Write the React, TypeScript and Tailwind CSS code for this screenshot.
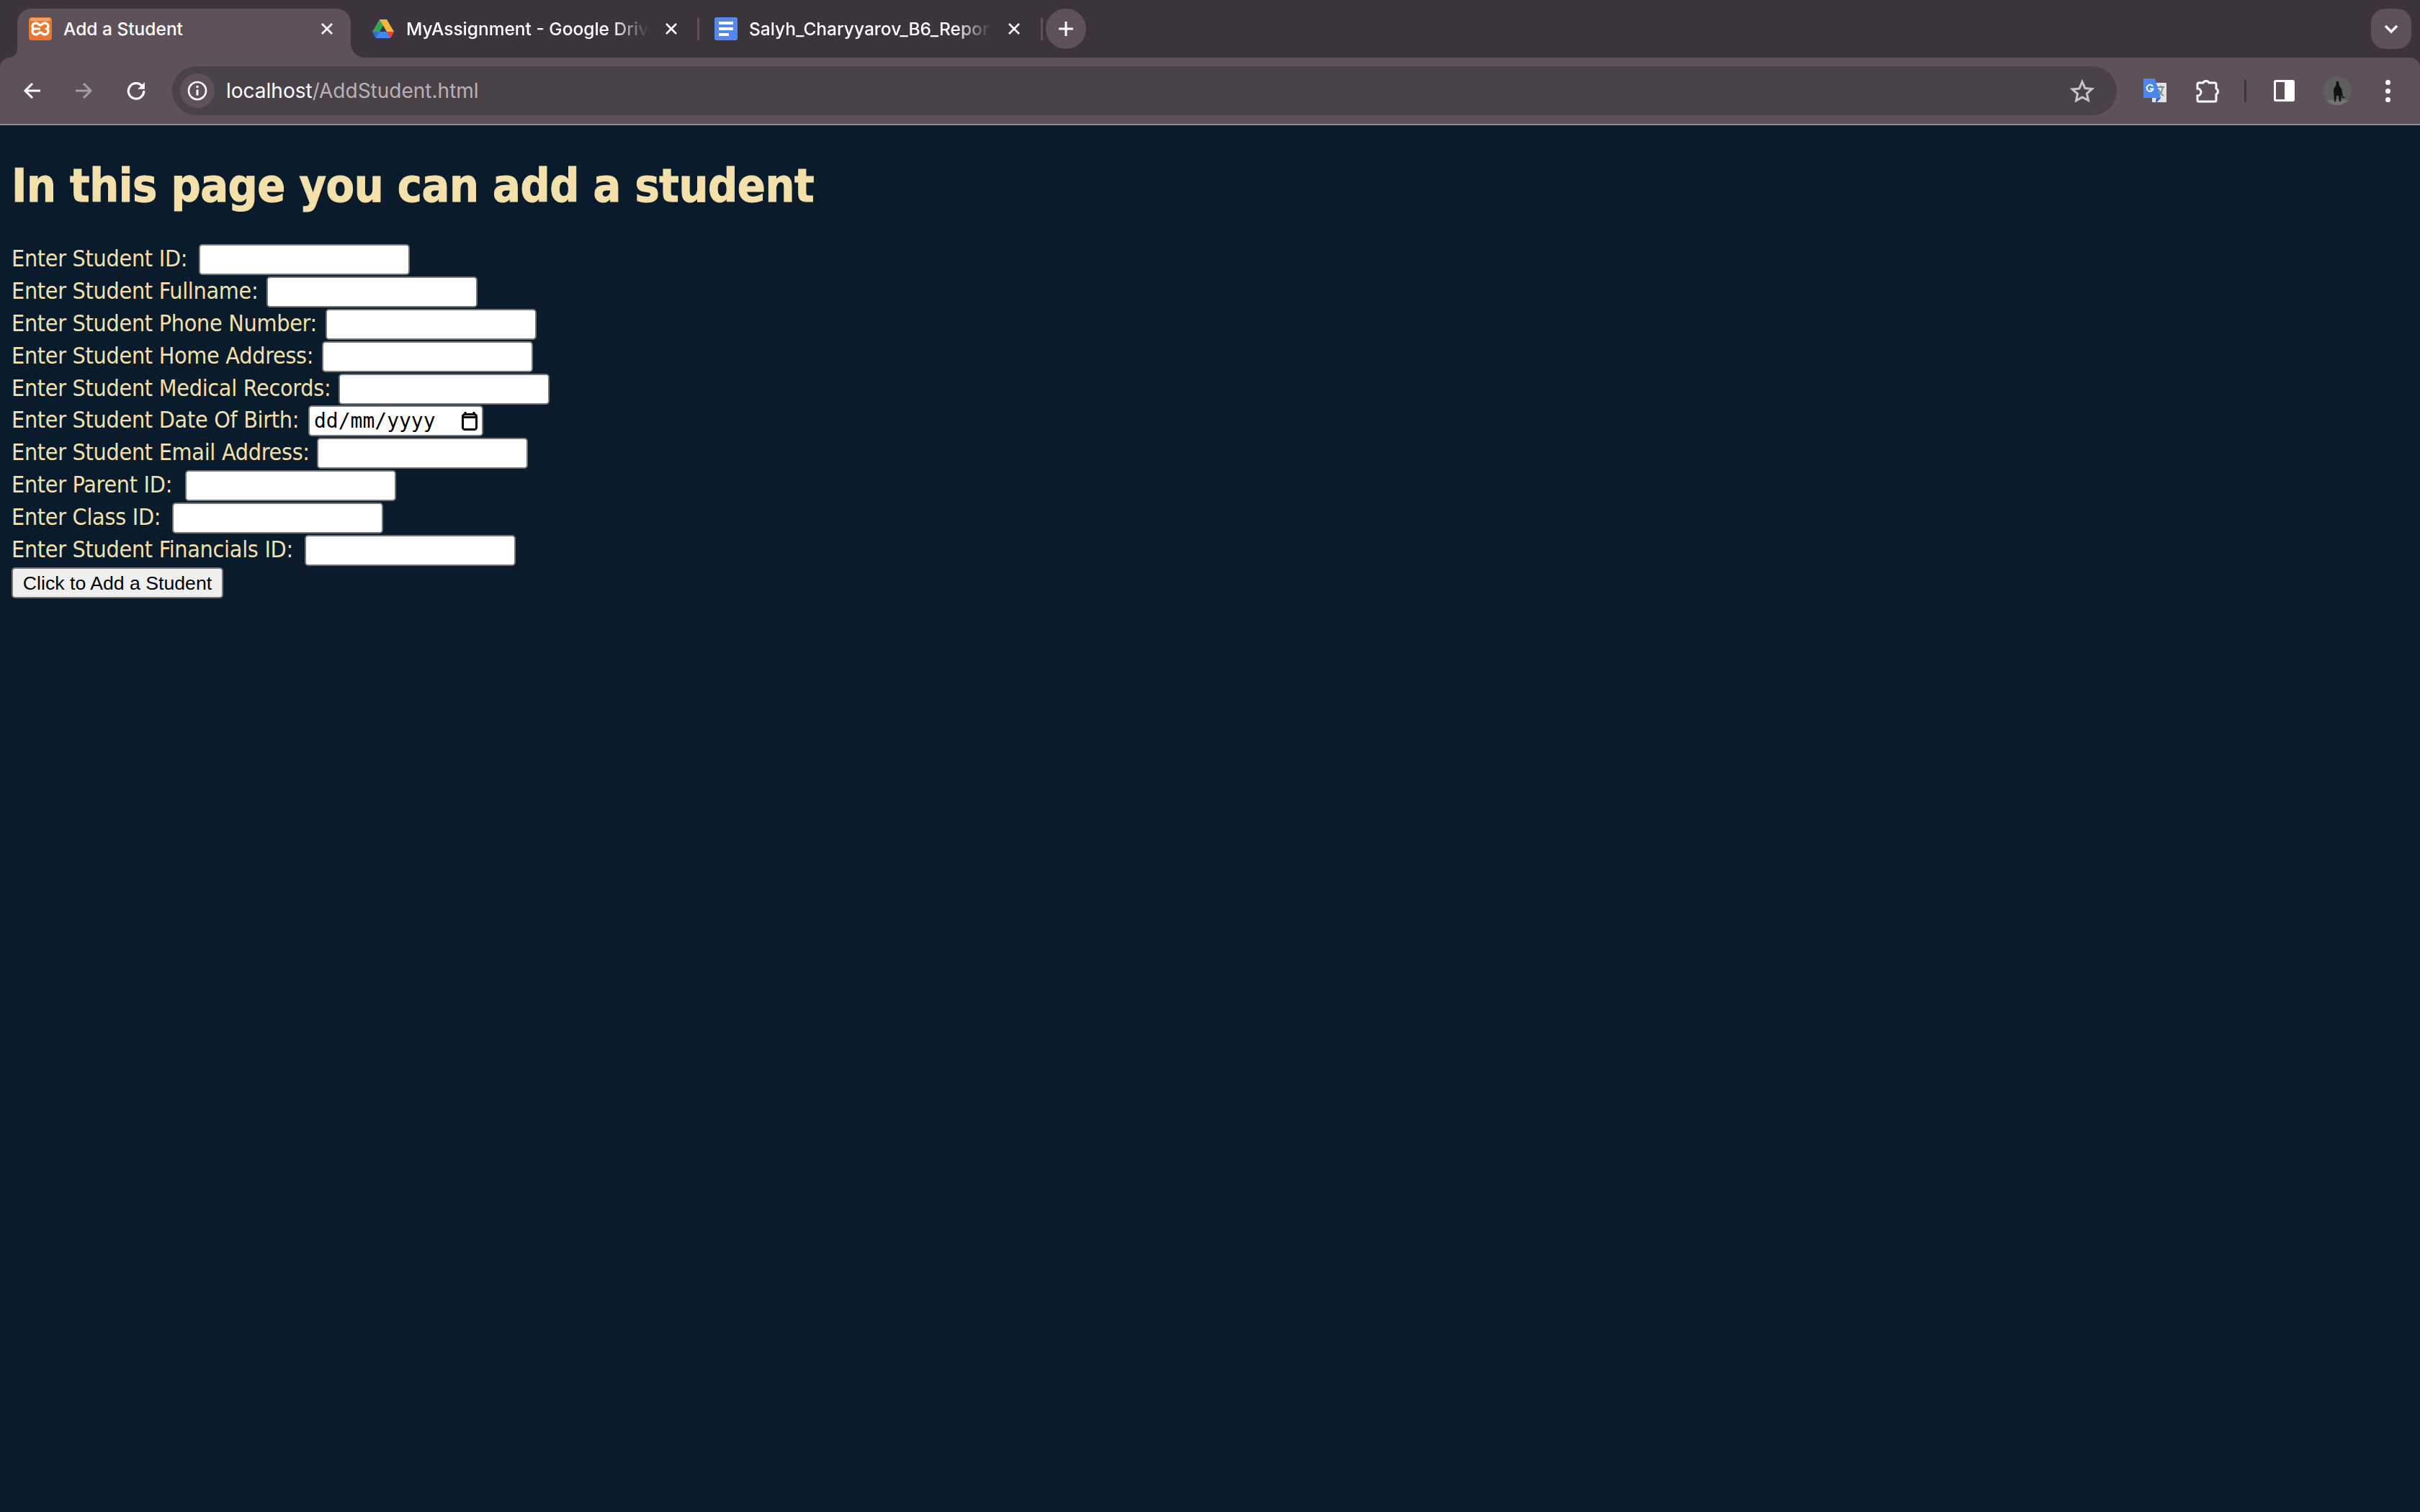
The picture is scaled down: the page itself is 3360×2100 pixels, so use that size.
const fields = [
  { label: "Enter Student ID:", width: "w-[247px]" },
  { label: "Enter Student Fullname:", width: "w-[341px]" },
  { label: "Enter Student Phone Number:", width: "w-[423px]" },
  { label: "Enter Student Home Address:", width: "w-[418px]" },
  { label: "Enter Student Medical Records:", width: "w-[441px]" },
  { label: "Enter Student Date Of Birth:", width: "w-[399px]", date: true },
  { label: "Enter Student Email Address:", width: "w-[411px]" },
  { label: "Enter Parent ID:", width: "w-[228px]" },
  { label: "Enter Class ID:", width: "w-[210px]" },
  { label: "Enter Student Financials ID:", width: "w-[394px]" },
];

function CloseIcon() {
  return (
    <svg width="20" height="20" viewBox="0 0 20 20" className="shrink-0">
      <path d="M3 3 17 17M17 3 3 17" stroke="#fff" strokeWidth="2.6" fill="none" />
    </svg>
  );
}

function XamppIcon() {
  return (
    <svg width="32" height="32" viewBox="0 0 32 32" className="shrink-0">
      <rect width="32" height="32" rx="4" fill="#e8762f" />
      <rect x="2" y="1" width="28" height="4" rx="2" fill="#f2a36c" />
      <path d="M10 8c3 0 4 3 6 3s3-3 6-3c3.500 0 5 2.500 5 5 0 1.500-1 2.500-2 3 1 .5 2 1.500 2 3 0 2.500-1.500 5-5 5-3 0-4-3-6-3s-3 3-6 3c-3.500 0-5-2.500-5-5 0-1.500 1-2.500 2-3-1-.5-2-1.500-2-3 0-2.500 1.500-5 5-5Z" stroke="#fff" strokeWidth="3.4" fill="none" />
      <path d="M8 16h8M16 16v0" stroke="#fff" strokeWidth="3" />
    </svg>
  );
}

function DriveIcon() {
  return (
    <svg width="30" height="26" viewBox="0 0 30 26" className="shrink-0">
      <path d="M10 0h10L10 17H0Z" fill="#34a853" />
      <path d="M10 0h10l10 17H20Z" fill="#f6b73c" />
      <path d="M0 17h30l-5 9H5Z" fill="#4285f4" />
      <path d="M0 17h10l-5 9Z" fill="#2f6fd6" />
      <path d="M20 17h10l-5 9Z" fill="#ea4335" />
    </svg>
  );
}

function DocsIcon() {
  return (
    <div className="flex h-8 w-8 shrink-0 flex-col items-start justify-center gap-[4px] rounded-[3px] bg-[#5587ee] pl-[6px]">
      <div className="h-[4px] w-5 bg-white" />
      <div className="h-[4px] w-5 bg-white" />
      <div className="h-[4px] w-[14px] bg-white" />
    </div>
  );
}

function TabSep() {
  return <div className="h-8 w-[3px] shrink-0 rounded-full bg-[#5e5159]" />;
}

function Strip() {
  return (
    <div className="flex h-20 items-start bg-[#3c343c] pt-3">
      {/* active tab */}
      <div className="relative ml-6 flex h-[68px] w-[463px] shrink-0 items-start gap-4 rounded-t-[20px] bg-[#5e5159] pl-4 pr-[23px] pt-3">
        <span className="absolute bottom-0 left-[-12px] h-3 w-3 bg-[#5e5159]">
          <span className="block h-3 w-3 rounded-br-[12px] bg-[#3c343c]" />
        </span>
        <span className="absolute bottom-0 right-[-20px] h-5 w-5 bg-[#5e5159]">
          <span className="block h-5 w-5 rounded-bl-[20px] bg-[#3c343c]" />
        </span>
        <XamppIcon />
        <span className="flex-1 truncate text-[24.500px] leading-8 font-medium text-white">Add a Student</span>
        <span className="mt-[6px]"><CloseIcon /></span>
      </div>
      {/* inactive tabs */}
      <div className="ml-[30px] mt-3 flex h-8 shrink-0 items-center">
        <DriveIcon />
        <span className="ml-[17px] w-[336px] overflow-hidden whitespace-nowrap text-[24.500px] leading-8 font-medium text-white [mask-image:linear-gradient(to_right,black_85%,transparent)]">MyAssignment - Google Drive</span>
        <span className="ml-[22px]"><CloseIcon /></span>
      </div>
      <div className="ml-[26px] mt-3 flex"><TabSep /></div>
      <div className="ml-[21px] mt-3 flex h-8 shrink-0 items-center">
        <DocsIcon />
        <span className="ml-4 w-[336px] overflow-hidden whitespace-nowrap text-[24.500px] leading-8 font-medium text-white [mask-image:linear-gradient(to_right,black_85%,transparent)]">Salyh_Charyyarov_B6_Report</span>
        <span className="ml-[22px]"><CloseIcon /></span>
      </div>
      <div className="ml-[27px] mt-3 flex"><TabSep /></div>
      <div className="ml-[4px] flex h-14 w-14 shrink-0 items-center justify-center rounded-full bg-[#5e5159]">
        <svg width="24" height="24" viewBox="0 0 24 24">
          <path d="M12 2v20M2 12h20" stroke="#fff" strokeWidth="3" />
        </svg>
      </div>
      <div className="ml-auto mr-3 flex h-14 w-14 shrink-0 items-center justify-center rounded-[20px] bg-[#5e5159]">
        <svg width="20" height="14" viewBox="0 0 20 14">
          <path d="M2 3l8 8 8-8" stroke="#fff" strokeWidth="3.400" fill="none" />
        </svg>
      </div>
    </div>
  );
}

function Toolbar() {
  return (
    <div className="bg-[#3c343c]">
      <div className="flex h-[92px] items-center rounded-t-[14px] bg-[#5e5159] pl-8 pr-5">
        <svg width="26" height="26" viewBox="0 0 26 26" className="shrink-0">
          <path d="M24 13H3M13 3 3 13l10 10" stroke="#fff" strokeWidth="3" fill="none" />
        </svg>
        <svg width="26" height="26" viewBox="0 0 26 26" className="ml-[45px] shrink-0">
          <path d="M2 13h21M13 3l10 10-10 10" stroke="#a59ca2" strokeWidth="3" fill="none" />
        </svg>
        <svg width="28" height="28" viewBox="0 0 26 26" className="ml-[46px] shrink-0">
          <path d="M21.500 8A10 10 0 1 0 23 13" stroke="#fff" strokeWidth="3" fill="none" />
          <path d="M24 2v9h-9Z" fill="#fff" />
        </svg>
        {/* address bar */}
        <div className="ml-[36px] flex h-[68px] w-[2700px] shrink-0 items-center rounded-full bg-[#4a4249] pl-[11px] pr-[31px]">
          <div className="flex h-12 w-12 items-center justify-center rounded-full bg-[#5e5159]">
            <svg width="28" height="28" viewBox="0 0 28 28">
              <circle cx="14" cy="14" r="12" stroke="#fff" strokeWidth="2.600" fill="none" />
              <path d="M14 12.500v8" stroke="#fff" strokeWidth="3" />
              <circle cx="14" cy="8.500" r="1.800" fill="#fff" />
            </svg>
          </div>
          <span className="ml-4 flex-1 text-[28px] text-white">
            localhost<span className="text-[#b9b1b6]">/AddStudent.html</span>
          </span>
          <svg width="34" height="32" viewBox="0 0 34 32">
            <path d="M17 3.500l4 9 9.600 1-7.200 6.400 2.100 9.500L17 25l-8.500 4.900 2.100-9.500L3.400 14l9.600-1Z" stroke="#c8c4c6" strokeWidth="3" fill="none" />
          </svg>
        </div>
        {/* translate */}
        <svg width="32" height="34" viewBox="0 0 32 34" className="ml-[37px] shrink-0">
          <rect x="12" y="6" width="20" height="27" rx="1" fill="#e3e3e3" />
          <path d="M19 12h10M24 10v2M20 24c4-2 6-7 7-12M21 15c1 4 4 7 7 9" stroke="#6f8f8c" strokeWidth="1.800" fill="none" />
          <path d="M1 0h15l8 27H1a1 1 0 0 1-1-1V1a1 1 0 0 1 1-1Z" fill="#4c85ec" />
          <path d="M18 27h6l-6 7-1-3Z" fill="#3367d6" />
          <path d="M13 11a4.500 4.500 0 1 0 .5 3.500H9" stroke="#fff" strokeWidth="2" fill="none" />
        </svg>
        <svg width="34" height="36" viewBox="0 0 34 36" className="ml-[41px] shrink-0">
          <path d="M4 7h6a4.500 4.500 0 0 1 8 0h8a2 2 0 0 1 2 2v6a4.500 4.500 0 0 1 0 8v8a2 2 0 0 1-2 2H4a2 2 0 0 1-2-2v-6a4 4 0 0 0 0-10V9a2 2 0 0 1 2-2Z" stroke="#fff" strokeWidth="3" fill="none" />
        </svg>
        <div className="ml-[33px] h-8 w-[3px] shrink-0 rounded-full bg-[#3c343c]" />
        <div className="ml-[38px] flex h-[30px] w-[29px] shrink-0 rounded-[3px] border-[3px] border-white">
          <div className="flex-1" />
          <div className="w-[11px] bg-white" />
        </div>
        <div className="ml-[39px] flex h-10 w-10 shrink-0 items-end justify-center overflow-hidden rounded-full bg-[#5f5f5f]">
          <svg width="40" height="40" viewBox="0 0 40 40">
            <rect y="33" width="40" height="7" fill="#737373" />
            <path d="M19 7h3l1 6 3 4 2 11 4 2-5 0-1-5-1 10h-2l-1-8-3 0-1 8h-2l-1-17 3-5Z" fill="#111" />
          </svg>
        </div>
        <div className="ml-[47px] flex shrink-0 flex-col gap-[5px]">
          <div className="h-[7px] w-[7px] rounded-full bg-white" />
          <div className="h-[7px] w-[7px] rounded-full bg-white" />
          <div className="h-[7px] w-[7px] rounded-full bg-white" />
        </div>
      </div>
      <div className="h-[2px] bg-[#958a91]" />
    </div>
  );
}

export default function App() {
  return (
    <div className="flex min-h-[2100px] flex-col bg-[#0a1b2c]">
      <div className="font-['Inter',sans-serif]">
        <Strip />
        <Toolbar />
      </div>
      <main className="pl-4 font-['DejaVu_Sans',sans-serif] font-stretch-condensed text-[#f3e0aa]">
        <h1 className="mt-[44px] text-[64px] leading-[80px] font-bold tracking-[-0.45px] [-webkit-text-stroke:1px_#f3e0aa]">In this page you can add a student</h1>
        <form className="mt-[41px] flex flex-col gap-[2px]">
          {fields.map((f) => (
            <div key={f.label} className={f.date ? "-mt-px flex h-[43px] items-center gap-[13px]" : "flex h-[43px] items-center gap-[13px]"}>
              <label className={`${f.width} mb-[3px] whitespace-nowrap text-[32px] leading-[40px] tracking-[-0.3px]`}>{f.label}</label>
              {f.date ? (
                <div className="flex h-[43px] w-[243px] items-center rounded-[5px] border-2 border-[#767676] bg-white pl-[6px] font-['DejaVu_Sans_Mono',monospace] text-[28px] tracking-normal text-black">
                  <span>dd/mm/yyyy</span>
                  <svg width="22" height="26" viewBox="0 0 22 26" className="ml-[36px]">
                    <path d="M5 0v4M17 0v4" stroke="#000" strokeWidth="3" />
                    <rect x="1.500" y="3.500" width="19" height="21" rx="3" stroke="#000" strokeWidth="3" fill="none" />
                    <path d="M1 6h20v3H1Z" fill="#000" />
                  </svg>
                </div>
              ) : (
                <input type="text" className="h-[43px] w-[293px] rounded-[5px] border-2 border-[#767676] bg-white" />
              )}
            </div>
          ))}
          <button type="button" className="h-[43px] w-[294px] rounded-[5px] border-2 border-[#767676] bg-[#efefef] font-['Liberation_Sans',sans-serif] text-[26.670px] text-black">
            Click to Add a Student
          </button>
        </form>
      </main>
    </div>
  );
}
